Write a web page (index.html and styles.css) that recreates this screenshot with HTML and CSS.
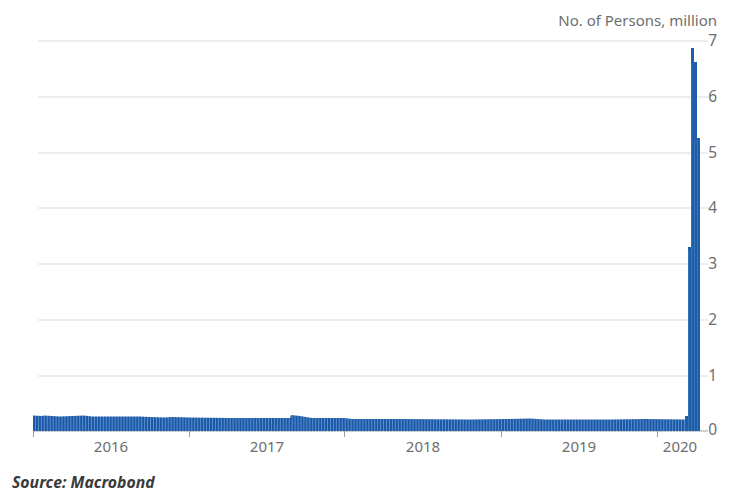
FILE: index.html
```html
<!DOCTYPE html>
<html lang="en">
<head>
<meta charset="utf-8">
<title>No. of Persons, million</title>
<link rel="stylesheet" href="styles.css">
</head>
<body>
<main class="page">
<svg class="chart" width="731" height="470" viewBox="0 0 731 470" role="img">
  <defs>
    <pattern id="weeks" x="33" y="0" width="2.95" height="10" patternUnits="userSpaceOnUse">
      <rect class="bar-fill" width="2.95" height="10"/>
      <rect class="bar-gap" x="2" width="0.95" height="10"/>
    </pattern>
  </defs>
  <g class="grid">
    <path d="M38 41H708M38 97H708M38 153H708M38 208H708M38 264H708M38 320H708M38 376H708"/>
  </g>
  <path class="axis" d="M33 431H708M33.5 431V437M189.5 431V437M344.5 431V437M501.5 431V437M657.5 431V437"/>
  <polygon class="bars" points="33,431 33,415.5 42,416 44,415.5 60,416.5 72,416 84,415.5 92,416.5 110,416.5 140,416.5 150,417 165,417.5 172,417 190,417.5 230,418 270,418 290,418 291,415 300,416 312,418 345,418 352,419 400,419 470,419.5 505,419 530,418.5 545,419.5 610,419.5 645,419 685,419.5 685,431"/>
  <path class="spike" d="M685 431V416H688V247H691V48H694V62H697V138H700V431Z"/>
  <path class="spike-gap" d="M688.5 431V250M691.5 431V64M694.5 431V140M697.5 431V140"/>
  <g class="labels">
    <text class="unit" x="717" y="26">No. of Persons, million</text>
    <text class="value" x="717" y="46">7</text>
    <text class="value" x="717" y="102">6</text>
    <text class="value" x="717" y="158">5</text>
    <text class="value" x="717" y="213">4</text>
    <text class="value" x="717" y="269">3</text>
    <text class="value" x="717" y="325">2</text>
    <text class="value" x="717" y="381">1</text>
    <text class="value" x="717" y="435">0</text>
    <text class="year" x="111" y="452">2016</text>
    <text class="year" x="267" y="452">2017</text>
    <text class="year" x="423" y="452">2018</text>
    <text class="year" x="579" y="452">2019</text>
    <text class="year" x="680" y="452">2020</text>
  </g>
</svg>
<p class="source">Source: Macrobond</p>
</main>
</body>
</html>
```
FILE: styles.css
```css
html, body {
  margin: 0;
  background: #fff;
}
.page {
  width: 731px;
  height: 494px;
  overflow: hidden;
}
.chart {
  display: block;
}
.grid path {
  fill: none;
  stroke: #e6e7e9;
  stroke-width: 1.5;
}
.axis {
  fill: none;
  stroke: #a0a0a0;
  stroke-width: 1;
}
.bars {
  fill: url(#weeks);
}
.bar-fill {
  fill: #1a58a8;
}
.bar-gap {
  fill: #5f90cb;
}
.spike {
  fill: #1f5ea8;
}
.spike-gap {
  fill: none;
  stroke: #4a7fbe;
  stroke-width: 0.6;
}
.labels text {
  font-family: "Noto Sans", "Liberation Sans", sans-serif;
  fill: #6e6e6e;
  font-size: 15px;
}
.unit,
.value {
  text-anchor: end;
}
.labels .value {
  font-size: 15.5px;
}
.labels .year {
  text-anchor: middle;
}
.source {
  margin: 2px 0 0 12px;
  font: italic 700 15.8px/20px "Noto Sans", "Liberation Sans", sans-serif;
  color: #3a3a3a;
}
```
